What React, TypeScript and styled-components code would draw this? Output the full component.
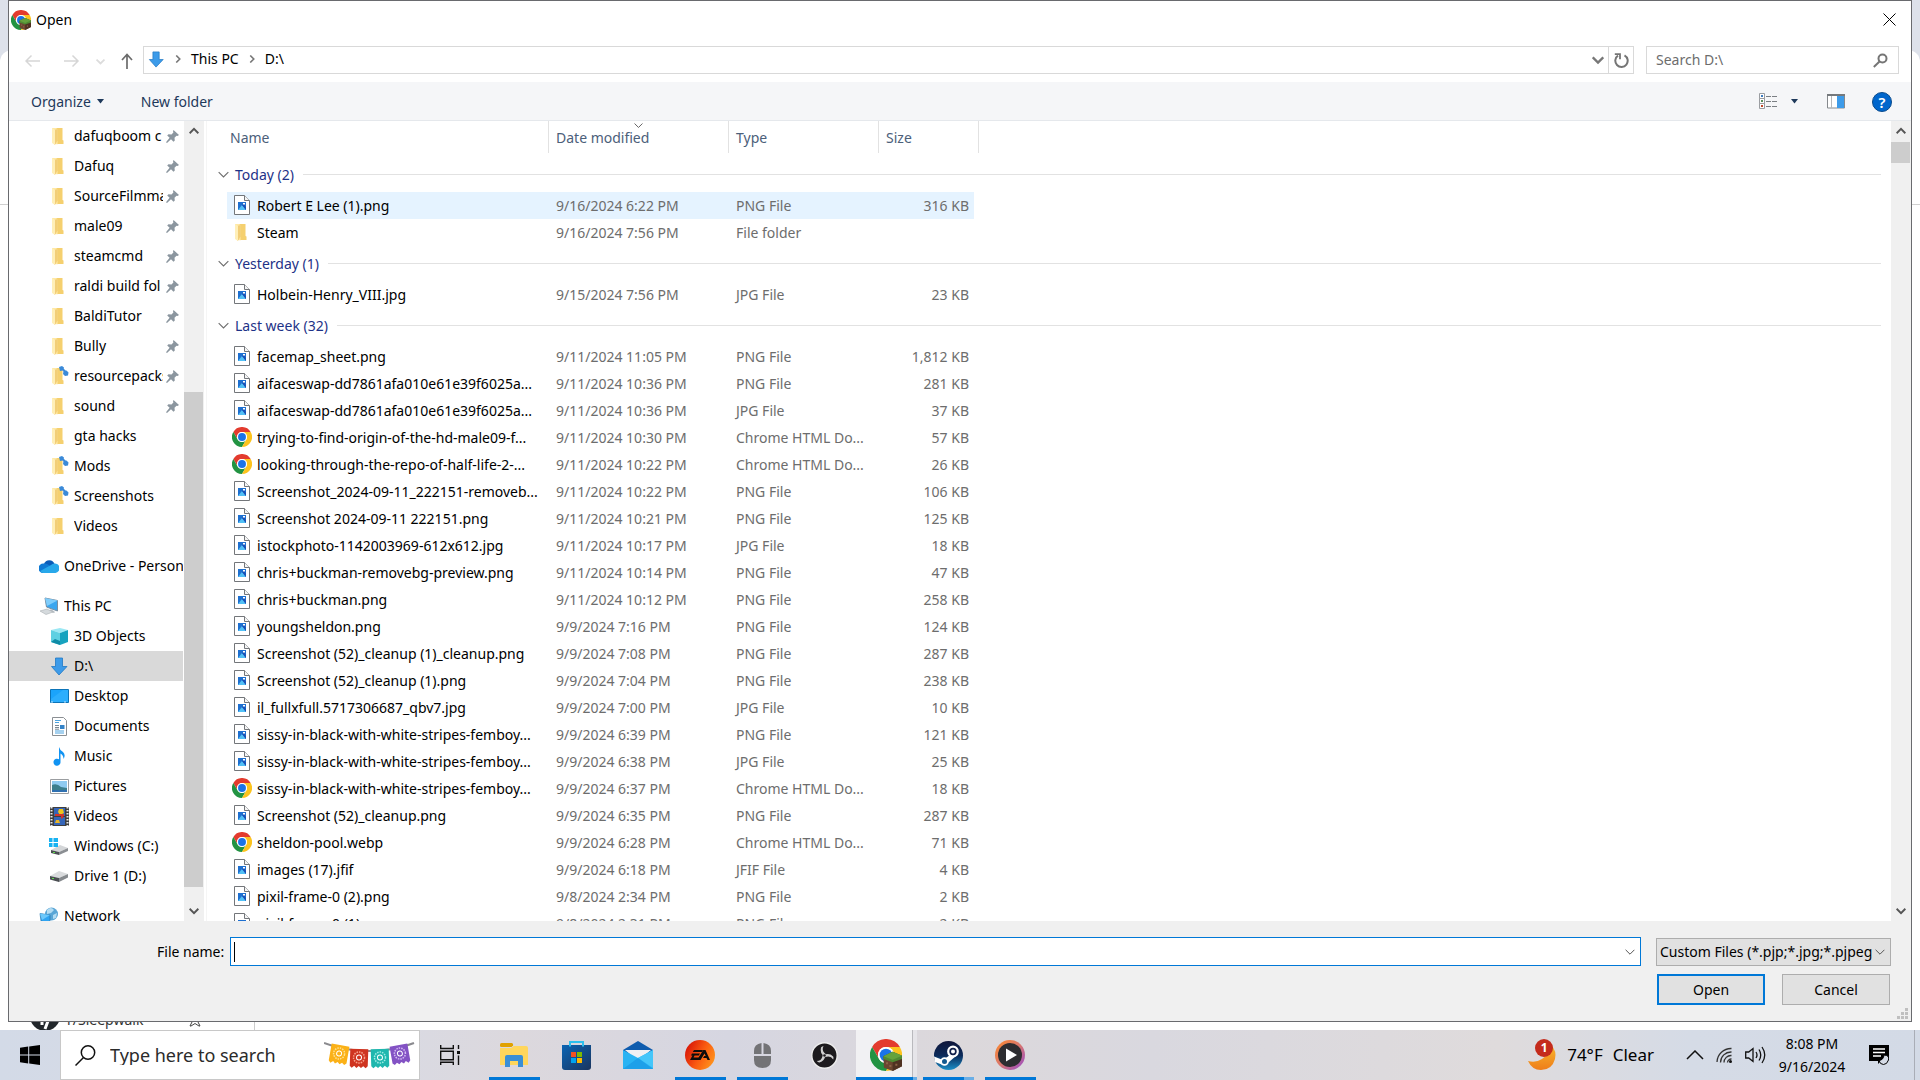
import React from "react";
import styled, { createGlobalStyle, css } from "styled-components";

const Global = createGlobalStyle`
  * { box-sizing: border-box; }
  html, body, #root { height: 100%; margin: 0; }
  body {
    font-family: "Noto Sans", "Open Sans", sans-serif;
    font-size: 14px;
    line-height: 20px;
    color: #000;
    overflow: hidden;
    background: #fff;
  }
  button, input, select { font: inherit; color: inherit; }
  svg { display: block; flex: none; }
`;

/* ---------- page and window ---------- */

const Screen = styled.div`
  position: relative;
  display: grid;
  grid-template-rows: minmax(0, 1fr) auto;
  height: 100vh;
`;

const Behind = styled.div`
  position: absolute;
  inset: 0 0 50px;
  display: flex;
  flex-direction: column;
  padding-top: 50px;
  background: #dde1ea;
`;

const BehindHeader = styled.div`
  height: 155px;
  flex: none;
  background: #fff;
  border-bottom: 1px solid #d0d0d0;
  border-radius: 12px 12px 0 0;
`;

const BehindBody = styled.div`
  flex: 1;
  display: flex;
  align-items: flex-end;
  background: #fff;
`;

const BehindSide = styled.div`
  display: flex;
  align-items: center;
  gap: 7px;
  width: 255px;
  height: 20px;
  padding: 0 53px 0 30px;
  border-right: 1px solid #ccc;
  font-size: 14px;
  color: #333;
  span { flex: 1; }
`;

const Window = styled.main`
  position: relative;
  display: flex;
  flex-direction: column;
  min-height: 0;
  margin: 0 8px 8px;
  border: 1px solid #696a6e;
  background: #fff;
`;

const TitleBar = styled.header`
  display: flex;
  align-items: center;
  gap: 5px;
  height: 37px;
  padding: 0 15px 0 2px;
  h1 {
    flex: 1;
    margin: 0;
    font-size: 14px;
    font-weight: 400;
  }
`;

const IconButton = styled.button`
  display: flex;
  align-items: center;
  justify-content: center;
  padding: 0;
  border: 0;
  background: none;
`;

const NavRow = styled.nav`
  display: flex;
  align-items: center;
  height: 44px;
  padding: 0 12px 0 16px;
`;

const NavArrows = styled.div`
  display: flex;
  align-items: center;
  gap: 16px;
  width: 118px;
  padding-top: 2px;
`;

const AddressBar = styled.div`
  flex: 1;
  display: flex;
  align-items: center;
  height: 28px;
  margin-right: 12px;
  border: 1px solid #d9d9d9;
`;

const Crumbs = styled.div`
  flex: 1;
  display: flex;
  align-items: center;
  gap: 9px;
  padding: 0 0 2px 4px;
  button { padding: 0; border: 0; background: none; }
`;

const RefreshCell = styled.div`
  display: flex;
  align-items: center;
  justify-content: center;
  width: 25px;
  height: 100%;
  margin-left: 4px;
  border-left: 1px solid #d9d9d9;
`;

const SearchBox = styled.label`
  display: flex;
  align-items: center;
  width: 253px;
  height: 28px;
  padding: 0 10px 0 9px;
  border: 1px solid #d9d9d9;
  input {
    flex: 1;
    min-width: 0;
    padding: 0;
    border: 0;
    outline: 0;
    background: none;
  }
  input::placeholder { color: #6d6d6d; opacity: 1; }
`;

const Toolbar = styled.div`
  display: flex;
  align-items: center;
  height: 39px;
  padding: 1px 19px 0 22px;
  border-bottom: 1px solid #e5e8ec;
  background: #f5f6f8;
  color: #1e395b;
`;

const ToolButton = styled.button<{ $end?: number }>`
  display: flex;
  align-items: center;
  gap: 6px;
  margin-right: ${(p) => p.$end ?? 0}px;
  padding: 0;
  border: 0;
  background: none;
`;

const Spacer = styled.div`flex: 1;`;

const Body = styled.div`
  flex: 1;
  display: flex;
  min-height: 0;
`;

/* ---------- scroll bars ---------- */

const ScrollTrack = styled.div`
  display: flex;
  flex-direction: column;
  flex: none;
  width: 20px;
  background: #f0f0f0;
  button { height: 20px; }
`;

const TrackPart = styled.div<{ $grow: number; $thumb?: boolean }>`
  flex: ${(p) => p.$grow} 1 0;
  ${(p) => p.$thumb && css`margin-right: 1px; background: #cdcdcd;`}
`;

function Scroll({ before, thumb, after }: { before: number; thumb: number; after: number }) {
  return (
    <ScrollTrack>
      <IconButton aria-label="Scroll up"><Chevron dir="up" size={10} width={2} color="#555" /></IconButton>
      <TrackPart $grow={before} />
      <TrackPart $grow={thumb} $thumb />
      <TrackPart $grow={after} />
      <IconButton aria-label="Scroll down"><Chevron size={10} width={2} color="#555" /></IconButton>
    </ScrollTrack>
  );
}

/* ---------- navigation pane ---------- */

const Tree = styled.aside`
  display: flex;
  flex-direction: column;
  gap: 10px;
  flex: none;
  width: 175px;
  overflow: hidden;
`;

const TreeGroup = styled.ul`
  margin: 0;
  padding: 0;
  list-style: none;
`;

const TreeRow = styled.li<{ $root?: boolean; $active?: boolean }>`
  display: flex;
  align-items: center;
  gap: 5px;
  height: 30px;
  margin-right: 1px;
  padding-left: ${(p) => (p.$root ? 30 : 40)}px;
  background: ${(p) => (p.$active ? "#d9d9d9" : "none")};
  white-space: nowrap;
  span {
    flex: 1;
    min-width: 0;
    overflow: hidden;
  }
`;

const IconSlot = styled.div`
  display: flex;
  justify-content: center;
  flex: none;
  width: 20px;
`;

const PinCell = styled.div`
  margin: 0 4px 0 -2px;
`;

/* ---------- file list ---------- */

const ListPane = styled.section`
  flex: 1;
  min-width: 0;
  overflow: hidden;
  margin-left: 2px;
  padding: 0 10px 0 9px;
  border-left: 1px solid #f5f5f5;
`;

const Table = styled.table`
  width: 100%;
  table-layout: fixed;
  border-spacing: 0;
  white-space: nowrap;
  td, th {
    padding: 0;
    text-align: left;
    font-weight: 400;
  }
`;

const HeadRow = styled.tr`
  height: 36px;
  color: #4c607a;
  th { vertical-align: top; }
`;

const HeadCell = styled.div<{ $first?: boolean }>`
  position: relative;
  height: 32px;
  padding: 1px 0 0 ${(p) => (p.$first ? 3 : 7)}px;
  border-right: 1px solid #e2e2e2;
  line-height: 32px;
`;

const SortMark = styled.div`
  position: absolute;
  top: 0;
  left: calc(50% - 5px);
`;

const GroupRow = styled.tr`height: 35px;`;

const GroupLabel = styled.div`
  display: flex;
  align-items: center;
  gap: 6px;
  padding-left: 2px;
  color: #1e3287;
  &::after {
    content: "";
    flex: 1;
    height: 1px;
    margin-left: 3px;
    background: #e2e2e2;
  }
`;

const FileRow = styled.tr<{ $hot?: boolean }>`
  height: 27px;
  color: #6d6d6d;
  td:nth-child(n + 2):nth-child(-n + 5) {
    background: ${(p) => (p.$hot ? "#e5f3ff" : "none")};
    background-clip: padding-box;
  }
  td:nth-child(3), td:nth-child(4) { padding-left: 7px; }
  td:nth-child(5) {
    padding-right: 5px;
    border-right: 5px solid transparent;
    text-align: right;
  }
`;

const NameCell = styled.div`
  display: flex;
  align-items: center;
  gap: 5px;
  padding-left: 5px;
  color: #000;
  svg { margin-bottom: 2px; }
`;

/* ---------- footer ---------- */

const Footer = styled.form`
  position: relative;
  display: flex;
  flex-direction: column;
  gap: 8px;
  height: 100px;
  padding: 16px 20px 0 148px;
  background: #f0f0f0;
`;

const FooterRow = styled.div<{ $end?: boolean }>`
  display: flex;
  align-items: center;
  justify-content: ${(p) => (p.$end ? "flex-end" : "flex-start")};
  gap: ${(p) => (p.$end ? 17 : 0)}px;
  padding-right: ${(p) => (p.$end ? 1 : 0)}px;
  label { flex: none; width: 73px; }
`;

const NameField = styled.div`
  flex: 1;
  display: flex;
  align-items: center;
  height: 29px;
  margin-right: 15px;
  padding: 0 5px 0 3px;
  border: 1px solid #0078d7;
  background: #fff;
  input {
    flex: 1;
    min-width: 0;
    height: 20px;
    padding: 0 2px;
    border: 0;
    border-left: 1px solid #000;
    outline: 0;
  }
`;

const TypeField = styled.div`
  display: grid;
  align-items: center;
  width: 235px;
  height: 28px;
  border: 1px solid #adadad;
  background: #e1e1e1;
  select {
    grid-area: 1 / 1;
    width: 100%;
    height: 26px;
    padding: 0 0 0 3px;
    border: 0;
    outline: 0;
    appearance: none;
    background: none;
  }
  svg {
    grid-area: 1 / 1;
    justify-self: end;
    margin-right: 5px;
    pointer-events: none;
  }
`;

const DialogButton = styled.button<{ $primary?: boolean }>`
  width: 108px;
  height: 31px;
  padding: 0;
  border: ${(p) => (p.$primary ? "2px solid #0078d7" : "1px solid #adadad")};
  background: #e1e1e1;
`;

const Grip = styled.div`
  position: absolute;
  right: 3px;
  bottom: 2px;
`;

/* ---------- taskbar ---------- */

const Taskbar = styled.footer`
  position: relative;
  display: flex;
  height: 50px;
  background: linear-gradient(90deg, #d3dae7 0, #d9dae3 20%, #dcd8dd 27%, #d6d6e1 38%, #dcd8db 50%, #d9d8df 60%, #dfdbdc 78%, #d5dbe6 88%, #d3dae6 100%);
`;

const StartButton = styled(IconButton)`width: 60px;`;

const TaskSearch = styled.label`
  display: flex;
  align-items: center;
  gap: 14px;
  width: 360px;
  padding: 0 4px 0 14px;
  border: 1px solid #c8c8c8;
  background: #fff;
  input {
    flex: 1;
    min-width: 0;
    padding: 0;
    border: 0;
    outline: 0;
    background: none;
    font-size: 18px;
  }
  input::placeholder { color: #2b2b2b; opacity: 1; }
`;

const Apps = styled.div`
  flex: 1;
  display: flex;
`;

const TaskView = styled(IconButton)`
  width: 63px;
  padding-right: 3px;
`;

const AppButton = styled.button<{ $open?: boolean; $front?: boolean; $stack?: boolean }>`
  position: relative;
  display: flex;
  align-items: center;
  justify-content: center;
  width: 62px;
  padding: 0;
  border: 0;
  background: ${(p) => (p.$front ? "linear-gradient(90deg, transparent 1px, #f1f1f3 1px 57px, #b9b9bd 57px 58px, #e6e5e9 58px)" : "none")};
  &::after {
    content: ${(p) => (p.$open ? '""' : "none")};
    position: absolute;
    left: ${(p) => (p.$front ? 1 : 6)}px;
    right: ${(p) => (p.$front ? 0 : 5)}px;
    bottom: 0;
    height: 3px;
    background: ${(p) =>
      p.$stack
        ? "linear-gradient(90deg, #0078d7 41px, #6aaee6 41px)"
        : p.$front
          ? "linear-gradient(90deg, #0078d7 57px, #6aaee6 57px)"
          : "#0078d7"};
  }
`;

const Tray = styled.div`
  display: flex;
  align-items: center;
  padding-right: 31px;
`;

const Weather = styled.button`
  display: flex;
  align-items: center;
  gap: 10px;
  margin-right: 32px;
  padding: 0;
  border: 0;
  background: none;
  font-size: 17px;
`;

const MoonBox = styled.div`
  position: relative;
  b {
    position: absolute;
    top: 0;
    left: 7px;
    width: 18px;
    height: 18px;
    border-radius: 9px;
    background: #c42b1c;
    color: #fff;
    font-size: 12px;
    line-height: 18px;
    text-align: center;
  }
`;

const TrayIcons = styled.div`
  display: flex;
  align-items: center;
  gap: 12px;
`;

const Clock = styled.time`
  width: 92px;
  margin-right: 11px;
  font-size: 14px;
  line-height: 23px;
  text-align: center;
`;

const DesktopEdge = styled.div`
  position: absolute;
  top: 0;
  bottom: 0;
  right: 5px;
  width: 1px;
  background: #a9adb6;
`;

/* ---------- icons ---------- */

function Chevron({ dir = "down", size = 10, width = 1, color = "#555" }: { dir?: "up" | "down" | "right"; size?: number; width?: number; color?: string }) {
  const turn = { down: 0, up: 180, right: -90 }[dir];
  return (
    <svg width={size} height={size} viewBox="0 0 10 10">
      <path d="M0.6 2.8 5 7.2 9.4 2.8" fill="none" stroke={color} strokeWidth={width} transform={`rotate(${turn} 5 5)`} />
    </svg>
  );
}

const Caret = () => <svg width="7" height="5" viewBox="0 0 7 5"><path d="M0 0h7L3.500 4.500z" fill="#1e395b" /></svg>;

function Chrome({ size = 20, block }: { size?: number; block?: boolean }) {
  return (
    <svg width={size} height={size} viewBox="0 0 48 48">
      <path d="M24 12H44.800A24 24 0 0 0 3.200 12L13.600 30A12 12 0 0 1 24 12Z" fill="#e33b2e" />
      <path d="M13.600 30 3.200 12A24 24 0 0 0 24 48L34.400 30A12 12 0 0 1 13.600 30Z" fill="#229342" />
      <path d="M34.400 30 24 48A24 24 0 0 0 44.800 12H24A12 12 0 0 1 34.400 30Z" fill="#fcc31e" />
      <circle cx="24" cy="24" r="12" fill="#fff" />
      <circle cx="24" cy="24" r="9.500" fill="#1a73e8" />
      {block && (
        <g>
          <path d="M20 26 34 19 48 25V41L34 48 21 43Z" fill="#6b4630" />
          <path d="M34 31V48L48 41V25Z" fill="#4f3222" />
          <path d="M20 26 34 19 48 25V30L34 35 20 30Z" fill="#4f8a32" />
          <path d="M20 26 34 19 48 25 34 31Z" fill="#64a33d" />
          <path d="M24 35h3v3h-3zM29 39h3v3h-3zM38 37h3v3h-3z" fill="#8b6246" />
        </g>
      )}
    </svg>
  );
}

const Folder = ({ linked }: { linked?: boolean }) => (
  <svg width="20" height="20" viewBox="0 0 20 20">
    <path d="M3 2h10.500v12l1 .5V18H5z" fill="#f5d06f" />
    <path d="M3 2h4l1.500 1v15.500L5 17.500 3 16z" fill="#ffe9a6" />
    <path d="M8.500 3v11.500L6 19 5 18.500V4z" fill="#e9bd5a" opacity=".6" />
    <path d="M3 2l3 2v15L3 17z" fill="#ffefb8" />
    {linked && (
      <g fill="#3b8ad8">
        <path d="M10 1l3-1 2 1.500-1 3-3 .5z" />
        <path d="M14.500 5l3-.5 2 2-.5 3-3 .5-2-2z" />
        <path d="M12.500 3l1.500-1 3.500 3.500-1.500 1.500z" />
      </g>
    )}
  </svg>
);

const FileIcon = () => (
  <svg width="20" height="20" viewBox="0 0 20 20">
    <path d="M2.500.5h10l5 5v14h-15z" fill="#fff" stroke="#73767a" />
    <path d="M12.500.5v5h5" fill="#f4f4f4" stroke="#73767a" />
    <rect x="6" y="7" width="8" height="8" fill="#1d6fd0" />
    <path d="M6 15l4-5 4 5z" fill="#52c0f5" />
    <path d="M10 10l2-1 2 3v3z" fill="#1a4fb4" />
    <rect x="11" y="8" width="2" height="1.500" fill="#fff" />
  </svg>
);

const Pin = () => (
  <svg width="13" height="13" viewBox="0 0 13 13">
    <path d="M7.500 0 13 5l-1.500 1-1-.2L8.500 7.800l.3 2.700-1.300 1.300L5 9.200 1 13l-1-.7L3.600 7.800 1.200 5.500l1.300-1.300 3 .2L7.400 2.400 7 1.200z" fill="#8b969f" />
  </svg>
);

const BlueDown = ({ size = 19 }: { size?: number }) => (
  <svg width={size} height={size} viewBox="0 0 19 19">
    <path d="M5.500 1h7v8.500H17L9 18 1.500 9.500h4z" fill="#3d9be9" stroke="#2178c4" strokeWidth=".8" />
  </svg>
);

const treeIcons: Record<string, React.ReactNode> = {
  folder: <Folder />,
  linked: <Folder linked />,
  down: <BlueDown />,
  onedrive: (
    <svg width="20" height="14" viewBox="0 0 20 14">
      <path d="M5 5a5.500 5.500 0 0 1 10.500 0L10 10z" fill="#0b5cb8" />
      <path d="M4.500 4.500Q9 4 12 8l-8 6a4.500 4.500 0 0 1 .5-9.500z" fill="#0f7ad4" />
      <path d="M15 4.500a4.500 4.500 0 0 1 1.500 9.500H4.500Q2 13.800 1.200 12L12 6q1.500-1.200 3-1.500z" fill="#28a8ea" />
    </svg>
  ),
  pc: (
    <svg width="20" height="18" viewBox="0 0 20 18">
      <path d="M6 1l12.500 2.500V14L7.500 10z" fill="#3aa6ef" stroke="#7c8fa0" />
      <path d="M6 1l12.500 2.500L8 9z" fill="#7fcdfb" />
      <path d="M12 12l4 3-1 1-5-2z" fill="#b5bcc2" />
      <path d="M1 14l7-2 6 3-7 2.500z" fill="#d5dadd" stroke="#aab0b4" strokeWidth=".6" />
    </svg>
  ),
  cube: (
    <svg width="19" height="19" viewBox="0 0 19 19">
      <path d="M1 3l9-2 8 2-8 3z" fill="#9be8f4" /><path d="M1 3l9 3v12l-9-3z" fill="#5ed0e2" /><path d="M18 3l-8 3v12l8-3z" fill="#17a3bf" />
      <path d="M1 15l4-3 5 2v4z" fill="#0f8ba6" />
    </svg>
  ),
  desktop: (
    <svg width="19" height="15" viewBox="0 0 19 15">
      <path d="M.5.5h18v13H.5z" fill="#1ba4fb" stroke="#0c74b8" /><path d="M1 10 13 1h5v12H1z" fill="#3db8ff" opacity=".5" /><path d="M1 13h17" stroke="#bfe6ff" strokeDasharray="2 11" />
    </svg>
  ),
  docs: (
    <svg width="19" height="19" viewBox="0 0 19 19">
      <path d="M2.500.5h11l3 3v15h-14z" fill="#fff" stroke="#8b8f93" />
      <path d="M5 3.500h6M5 5.500h4M5 14h9M5 16h9" stroke="#4ca3df" /><path d="M5 8.500h4M5 10.500h4M5 12.200h4" stroke="#7b8893" /><path d="M10 8h4.500v4H10z" fill="#3383c8" />
    </svg>
  ),
  music: (
    <svg width="19" height="19" viewBox="0 0 19 19">
      <path d="M9 0q1 3.500 4 5 3 3 .5 7 0-4-3-5.500V15A3.500 3.500 0 1 1 9 12.300z" fill="#1193f2" />
    </svg>
  ),
  pictures: (
    <svg width="19" height="15" viewBox="0 0 19 15">
      <path d="M.5.5h18v14H.5z" fill="#fff" stroke="#9a9da0" /><path d="M2 2h15v7H2z" fill="#8fcbf0" /><path d="M2 6q5-2 9 2l6 1v4H2z" fill="#3d7f8c" /><path d="M2 11h15v2H2z" fill="#2f70b0" />
    </svg>
  ),
  videos: (
    <svg width="19" height="19" viewBox="0 0 19 19">
      <path d="M0 0h19v19H0z" fill="#3e3e3e" /><path d="M1.500 0v19M17.500 0v19" stroke="#e8e8e8" strokeWidth="2" strokeDasharray="1.500 1.500" />
      <path d="M4 1h11v8H4zM4 10h11v8H4z" fill="#3565b8" /><path d="M9 2h4l1 4-4 2-2-3z" fill="#f0c51c" /><path d="M5 7h9v2H5zM11 8l3 2-3 2z" fill="#d0342c" /><path d="M6 13h3l1 3H5z" fill="#e8b52a" />
    </svg>
  ),
  winDrive: (
    <svg width="20" height="18" viewBox="0 0 20 18">
      <path d="M2 13l9-5 8 3-9 4z" fill="#d4d6d8" /><path d="M2 13l8 2v3l-8-2z" fill="#4a4e52" /><path d="M10 15l9-4v3l-9 4z" fill="#8a8e92" /><path d="M4 15h2v1H4z" fill="#5fe04c" />
      <path d="M0 1h3.500v4H0zM4.500 1H9v4H4.500zM0 6h3.500v4H0zM4.500 6H9v4H4.500z" fill="#17b2f2" />
    </svg>
  ),
  drive: (
    <svg width="20" height="12" viewBox="0 0 20 12">
      <path d="M1 6l9-5 9 3-9 4z" fill="#d9dbdd" /><path d="M1 6l9 2v4l-9-2.500z" fill="#4a4e52" /><path d="M10 8l9-4v3.500l-9 4.500z" fill="#85898d" /><path d="M3 8h2v1H3z" fill="#5fe04c" />
    </svg>
  ),
  network: (
    <svg width="20" height="18" viewBox="0 0 20 18">
      <circle cx="12.500" cy="7" r="6.500" fill="#5aa6d6" /><path d="M8 3q4-4 7 0l-3 3-4 1zM14 8l4-2-1 5-3 1z" fill="#b4dcf2" />
      <path d="M1 6.500l10 1.500v8L2 14z" fill="#2fa4f2" stroke="#2a77ad" strokeWidth=".7" /><path d="M1 6.500l10 1.500-8 5z" fill="#6cc8fb" />
    </svg>
  ),
};

/* ---------- data ---------- */

type Node = { icon: string; name: string; pin?: boolean; root?: boolean; active?: boolean };

const tree: Node[][] = [
  [
    { icon: "folder", name: "dafuqboom c", pin: true },
    { icon: "folder", name: "Dafuq", pin: true },
    { icon: "folder", name: "SourceFilmma", pin: true },
    { icon: "folder", name: "male09", pin: true },
    { icon: "folder", name: "steamcmd", pin: true },
    { icon: "folder", name: "raldi build fol", pin: true },
    { icon: "folder", name: "BaldiTutor", pin: true },
    { icon: "folder", name: "Bully", pin: true },
    { icon: "linked", name: "resourcepacks", pin: true },
    { icon: "folder", name: "sound", pin: true },
    { icon: "folder", name: "gta hacks" },
    { icon: "linked", name: "Mods" },
    { icon: "linked", name: "Screenshots" },
    { icon: "folder", name: "Videos" },
  ],
  [{ icon: "onedrive", name: "OneDrive - Person", root: true }],
  [
    { icon: "pc", name: "This PC", root: true },
    { icon: "cube", name: "3D Objects" },
    { icon: "down", name: "D:\\", active: true },
    { icon: "desktop", name: "Desktop" },
    { icon: "docs", name: "Documents" },
    { icon: "music", name: "Music" },
    { icon: "pictures", name: "Pictures" },
    { icon: "videos", name: "Videos" },
    { icon: "winDrive", name: "Windows (C:)" },
    { icon: "drive", name: "Drive 1 (D:)" },
  ],
  [{ icon: "network", name: "Network", root: true }],
];

type Entry = [name: string, date: string, type: string, size: string];
const PNG = "PNG File";
const JPG = "JPG File";
const WEB = "Chrome HTML Do...";

const groups: { title: string; files: Entry[] }[] = [
  {
    title: "Today (2)",
    files: [
      ["Robert E Lee (1).png", "9/16/2024 6:22 PM", PNG, "316 KB"],
      ["Steam", "9/16/2024 7:56 PM", "File folder", ""],
    ],
  },
  { title: "Yesterday (1)", files: [["Holbein-Henry_VIII.jpg", "9/15/2024 7:56 PM", JPG, "23 KB"]] },
  {
    title: "Last week (32)",
    files: [
      ["facemap_sheet.png", "9/11/2024 11:05 PM", PNG, "1,812 KB"],
      ["aifaceswap-dd7861afa010e61e39f6025a...", "9/11/2024 10:36 PM", PNG, "281 KB"],
      ["aifaceswap-dd7861afa010e61e39f6025a...", "9/11/2024 10:36 PM", JPG, "37 KB"],
      ["trying-to-find-origin-of-the-hd-male09-f...", "9/11/2024 10:30 PM", WEB, "57 KB"],
      ["looking-through-the-repo-of-half-life-2-...", "9/11/2024 10:22 PM", WEB, "26 KB"],
      ["Screenshot_2024-09-11_222151-removeb...", "9/11/2024 10:22 PM", PNG, "106 KB"],
      ["Screenshot 2024-09-11 222151.png", "9/11/2024 10:21 PM", PNG, "125 KB"],
      ["istockphoto-1142003969-612x612.jpg", "9/11/2024 10:17 PM", JPG, "18 KB"],
      ["chris+buckman-removebg-preview.png", "9/11/2024 10:14 PM", PNG, "47 KB"],
      ["chris+buckman.png", "9/11/2024 10:12 PM", PNG, "258 KB"],
      ["youngsheldon.png", "9/9/2024 7:16 PM", PNG, "124 KB"],
      ["Screenshot (52)_cleanup (1)_cleanup.png", "9/9/2024 7:08 PM", PNG, "287 KB"],
      ["Screenshot (52)_cleanup (1).png", "9/9/2024 7:04 PM", PNG, "238 KB"],
      ["il_fullxfull.5717306687_qbv7.jpg", "9/9/2024 7:00 PM", JPG, "10 KB"],
      ["sissy-in-black-with-white-stripes-femboy...", "9/9/2024 6:39 PM", PNG, "121 KB"],
      ["sissy-in-black-with-white-stripes-femboy...", "9/9/2024 6:38 PM", JPG, "25 KB"],
      ["sissy-in-black-with-white-stripes-femboy...", "9/9/2024 6:37 PM", WEB, "18 KB"],
      ["Screenshot (52)_cleanup.png", "9/9/2024 6:35 PM", PNG, "287 KB"],
      ["sheldon-pool.webp", "9/9/2024 6:28 PM", WEB, "71 KB"],
      ["images (17).jfif", "9/9/2024 6:18 PM", "JFIF File", "4 KB"],
      ["pixil-frame-0 (2).png", "9/8/2024 2:34 PM", PNG, "2 KB"],
      ["pixil-frame-0 (1).png", "9/8/2024 2:31 PM", PNG, "2 KB"],
    ],
  },
];

const fileIcon = (type: string) => (type === WEB ? <Chrome /> : type === "File folder" ? <Folder /> : <FileIcon />);

/* ---------- taskbar drawings ---------- */

const flags: [number, number, number, string, string][] = [
  [6, 4, 10, "#fbb117", "#ffe08a"],
  [26, 8, 2, "#cf3420", "#f7a08a"],
  [47, 8, -2, "#1fb7ae", "#9fece4"],
  [67, 4, -10, "#8352c4", "#d3b8f2"],
];

const Bunting = () => (
  <svg width="91" height="28" viewBox="0 0 91 28">
    <path d="M0 2Q20 10 45 10T90 2" fill="none" stroke="#8a8a8e" strokeWidth="2" />
    {flags.map(([x, y, turn, fill, ink]) => (
      <g key={fill} transform={`translate(${x} ${y}) rotate(${turn} 9 9)`}>
        <path d="M0 0h18v17l-2 2-2.500-2-2.200 2L9 17l-2.300 2-2.200-2L2 19l-2-2z" fill={fill} />
        <circle cx="9" cy="8.500" r="5.500" fill="none" stroke={ink} strokeWidth="1.500" strokeDasharray="1.500 1" />
        <circle cx="9" cy="8.500" r="2.500" fill="none" stroke="#fff" />
      </g>
    ))}
  </svg>
);

const apps: { name: string; open?: boolean; front?: boolean; stack?: boolean; icon: React.ReactNode }[] = [
  {
    name: "File Explorer", open: true,
    icon: (
      <svg width="28" height="24" viewBox="0 0 28 24">
        <path d="M0 5h11l3-2h12q2 0 2 2v17H0z" fill="#ffd65c" /><path d="M0 1.500Q0 0 1.500 0H12q1.500 1 1 2.500L11.500 4H1.500Q0 4 0 3z" fill="#e0a100" />
        <path d="M5 24V14q0-2 2-2h14q2 0 2 2v10h-5v-6h-8v6z" fill="#3a8fd6" />
      </svg>
    ),
  },
  {
    name: "Store",
    icon: (
      <svg width="29" height="29" viewBox="0 0 29 29">
        <defs><linearGradient id="st" x2="1" y2="1"><stop stopColor="#0a64b4" /><stop offset="1" stopColor="#1b355e" /></linearGradient></defs>
        <path d="M0 4h29v22q0 3-3 3H3q-3 0-3-3z" fill="url(#st)" /><path d="M8 5.500V1h13v4.500" fill="none" stroke="#2cc0ee" strokeWidth="2" />
        <path d="M9 11h5v5H9z" fill="#f25022" /><path d="M15 11h5v5h-5z" fill="#7fba00" /><path d="M9 17h5v5H9z" fill="#00a4ef" /><path d="M15 17h5v5h-5z" fill="#ffb900" />
      </svg>
    ),
  },
  {
    name: "Mail",
    icon: (
      <svg width="30" height="28" viewBox="0 0 30 28">
        <path d="M0 9 15 0l15 9v4H0z" fill="#0f5cae" /><path d="M2 9h26L15 20z" fill="#f0f0f3" />
        <path d="M0 9l15 8 15-8v19H0z" fill="#29b3f3" /><path d="M30 9v18L15 17z" fill="#45c6fa" /><path d="M0 28 15 17l15 11z" fill="#1593e2" opacity=".6" />
      </svg>
    ),
  },
  {
    name: "EA", open: true,
    icon: (
      <svg width="30" height="30" viewBox="0 0 30 30">
        <defs><linearGradient id="ea" x1="0" y1="0.300" x2="1" y2="0.800"><stop stopColor="#d81608" /><stop offset=".5" stopColor="#fa5a10" /><stop offset="1" stopColor="#ff9a1e" /></linearGradient></defs>
        <circle cx="15" cy="15" r="15" fill="url(#ea)" />
        <path d="M9 10h9l-1.200 2H7.800zM7 13.500h8l-1.200 2H9.500l-1 2h5l4.800-7.500h2.200L25 20h-2.500l-1-2H18l1.200-2h1.500l-1.200-2.500L15.500 20H5l2.500-4.500H6z" fill="#0c0c0c" />
      </svg>
    ),
  },
  {
    name: "Mouse settings", open: true,
    icon: (
      <svg width="17" height="25" viewBox="0 0 17 25">
        <path d="M7.500 0v11H0V8q0-7 7.500-8zM9.500 0v11H17V8q0-7-7.500-8zM0 13h17v4q0 8-8.500 8T0 17z" fill="#737376" />
      </svg>
    ),
  },
  {
    name: "OBS Studio",
    icon: (
      <svg width="27" height="27" viewBox="0 0 27 27">
        <circle cx="13.500" cy="13.500" r="12.700" fill="#1d1b1e" stroke="#eee" strokeWidth="1.400" />
        {[0, 120, 240].map((a) => (
          <path key={a} d="M13.500 14.500Q8.500 11 10 5.500 10.500 4.500 12.500 4 10.500 8 13.500 11q1.500 1 1.500 2z" fill="#d0d0d0" transform={`rotate(${a} 13.500 13.500)`} />
        ))}
        <circle cx="13.500" cy="13.500" r="1.300" fill="#1d1b1e" />
      </svg>
    ),
  },
  { name: "Google Chrome", open: true, front: true, icon: <Chrome size={32} block /> },
  {
    name: "Steam", open: true, stack: true,
    icon: (
      <svg width="29" height="29" viewBox="0 0 29 29">
        <defs><linearGradient id="sm" x2="0" y2="1"><stop stopColor="#10163a" /><stop offset=".5" stopColor="#0b2a5a" /><stop offset="1" stopColor="#1b8fc8" /></linearGradient></defs>
        <circle cx="14.500" cy="14.500" r="14.500" fill="url(#sm)" />
        <path d="M0 15.500 9 19l7-5 4-3 3 3-8 7-6 3-8-3z" fill="#fff" />
        <circle cx="19" cy="10.500" r="4.800" fill="#12204a" stroke="#fff" strokeWidth="2.200" /><circle cx="19" cy="10.500" r="2" fill="#fff" />
        <circle cx="10.500" cy="20.500" r="3.400" fill="#12598f" stroke="#fff" strokeWidth="1.800" />
      </svg>
    ),
  },
  {
    name: "Media Player", open: true,
    icon: (
      <svg width="30" height="30" viewBox="0 0 30 30">
        <defs><linearGradient id="mp" x2="1" y2="1"><stop stopColor="#ff8a2a" /><stop offset=".5" stopColor="#d9776e" /><stop offset="1" stopColor="#9447d0" /></linearGradient></defs>
        <circle cx="15" cy="15" r="15" fill="url(#mp)" /><circle cx="15" cy="15" r="12" fill="#2d2d30" /><path d="M11 8.500v13L22 15z" fill="#fff" />
      </svg>
    ),
  },
];

export default function App() {
  return (
    <Screen>
      <Global />
      <Behind aria-hidden="true">
        <BehindHeader />
        <BehindBody>
          <BehindSide>
            <svg width="30" height="30" viewBox="0 0 30 30">
              <circle cx="15" cy="11" r="15" fill="#22272b" /><path d="M12 11v9M21 8l-6 16" stroke="#fff" strokeWidth="3" />
            </svg>
            <span>r/Sleepwalk</span>
            <svg width="12" height="14" viewBox="0 0 12 14"><path d="M6 1l1.700 4H11L8.500 8 11 13H10L6 10.500 2 13H1L3.500 8 1 5h3.300z" fill="none" stroke="#444" /></svg>
          </BehindSide>
        </BehindBody>
      </Behind>

      <Window>
        <TitleBar>
          <Chrome block />
          <h1>Open</h1>
          <IconButton aria-label="Close">
            <svg width="13" height="13" viewBox="0 0 13 13"><path d="M.5.5l12 12M12.500.5l-12 12" stroke="#000" /></svg>
          </IconButton>
        </TitleBar>

        <NavRow>
          <NavArrows>
            <IconButton aria-label="Back"><svg width="22" height="16" viewBox="0 0 22 16"><path d="M15 8H1M6.500 2.500 1 8l5.500 5.500" fill="none" stroke="#d6d6d6" strokeWidth="1.500" /></svg></IconButton>
            <IconButton aria-label="Forward"><svg width="17" height="16" viewBox="0 0 17 16"><path d="M1 8h14M9.500 2.500 15 8l-5.500 5.500" fill="none" stroke="#d6d6d6" strokeWidth="1.500" /></svg></IconButton>
            <IconButton aria-label="Recent locations"><Chevron size={9} width={2} color="#dcdcdc" /></IconButton>
            <IconButton aria-label="Up"><svg width="12" height="16" viewBox="0 0 12 16"><path d="M6 16V2M1 7l5-5.500L11 7" fill="none" stroke="#6b6b6b" strokeWidth="1.700" /></svg></IconButton>
          </NavArrows>
          <AddressBar>
            <Crumbs>
              <BlueDown size={17} />
              <Chevron dir="right" size={8} width={2} color="#777" />
              <button>This PC</button>
              <Chevron dir="right" size={8} width={2} color="#777" />
              <button>D:\</button>
            </Crumbs>
            <IconButton aria-label="Previous locations"><Chevron size={12} width={2} color="#777" /></IconButton>
            <RefreshCell>
              <IconButton aria-label="Refresh">
                <svg width="15" height="15" viewBox="0 0 15 15"><path d="M10.500 2.300A6.200 6.200 0 1 1 4 2.600" fill="none" stroke="#757575" strokeWidth="2" /><path d="M.8 1.200h5.200v5" fill="none" stroke="#757575" strokeWidth="1.800" /></svg>
              </IconButton>
            </RefreshCell>
          </AddressBar>
          <SearchBox>
            <input placeholder="Search D:\" aria-label="Search D:\" />
            <svg width="15" height="15" viewBox="0 0 15 15"><circle cx="9.500" cy="5.500" r="4" fill="none" stroke="#757575" strokeWidth="2" /><path d="M6.500 8.500.8 14" stroke="#757575" strokeWidth="2" /></svg>
          </SearchBox>
        </NavRow>

        <Toolbar>
          <ToolButton $end={37}>Organize<Caret /></ToolButton>
          <ToolButton>New folder</ToolButton>
          <Spacer />
          <ToolButton $end={14} aria-label="Change view">
            <svg width="18" height="17" viewBox="0 0 18 17">
              <path d="M.5.500h5v5h-5zM.5 5.500h5v5h-5zM.5 10.500h5v5h-5z" fill="#fff" stroke="#9a9da1" />
              <path d="M2 2h2v2H2z" fill="#3d7cc0" /><path d="M2 7h2v2H2z" fill="#5a8f5a" /><path d="M2 12h2v2H2z" fill="#c04a2c" />
              <path d="M7 3.500h5M13 3.500h5M7 8.500h5M13 8.500h5M7 13.500h5M13 13.500h5" stroke="#7b7f84" />
            </svg>
          </ToolButton>
          <ToolButton $end={29} aria-label="More views"><Caret /></ToolButton>
          <ToolButton $end={27} aria-label="Preview pane">
            <svg width="18" height="15" viewBox="0 0 18 15">
              <path d="M.5.500h17v13.500H.5z" fill="#fff" stroke="#85898d" /><path d="M0 1h18" stroke="#75797d" strokeWidth="2" /><path d="M4.500 2v12" stroke="#b5b8bb" /><path d="M10 2h7v12h-7z" fill="#3d9be9" />
            </svg>
          </ToolButton>
          <ToolButton aria-label="Help">
            <svg width="20" height="20" viewBox="0 0 20 20">
              <circle cx="10" cy="10" r="9.500" fill="#0066cc" stroke="#094a8c" />
              <text x="10" y="15.500" textAnchor="middle" fontSize="15" fontWeight="600" fill="#fff">?</text>
            </svg>
          </ToolButton>
        </Toolbar>

        <Body>
          <Tree aria-label="Folders">
            {tree.map((rows, g) => (
              <TreeGroup key={g}>
                {rows.map((n) => (
                  <TreeRow key={n.name} $root={n.root} $active={n.active}>
                    <IconSlot>{treeIcons[n.icon]}</IconSlot>
                    <span>{n.name}</span>
                    {n.pin && <PinCell><Pin /></PinCell>}
                  </TreeRow>
                ))}
              </TreeGroup>
            ))}
          </Tree>
          <Scroll before={251} thumb={495} after={14} />

          <ListPane>
            <Table>
              <colgroup>
                <col style={{ width: 11 }} />
                <col style={{ width: 322 }} />
                <col style={{ width: 180 }} />
                <col style={{ width: 150 }} />
                <col style={{ width: 100 }} />
                <col />
              </colgroup>
              <thead>
                <HeadRow>
                  <th />
                  <th><HeadCell $first>Name</HeadCell></th>
                  <th><HeadCell>Date modified<SortMark><Chevron size={9} /></SortMark></HeadCell></th>
                  <th><HeadCell>Type</HeadCell></th>
                  <th><HeadCell>Size</HeadCell></th>
                  <th />
                </HeadRow>
              </thead>
              {groups.map((g, gi) => (
                <tbody key={g.title}>
                  <GroupRow>
                    <th colSpan={6} scope="rowgroup">
                      <GroupLabel><Chevron size={11} color="#6d6d6d" />{g.title}</GroupLabel>
                    </th>
                  </GroupRow>
                  {g.files.map(([name, date, type, size], i) => (
                    <FileRow key={i} $hot={gi === 0 && i === 0}>
                      <td />
                      <td><NameCell>{fileIcon(type)}{name}</NameCell></td>
                      <td>{date}</td>
                      <td>{type}</td>
                      <td>{size}</td>
                      <td />
                    </FileRow>
                  ))}
                </tbody>
              ))}
            </Table>
          </ListPane>
          <Scroll before={1} thumb={21} after={738} />
        </Body>

        <Footer onSubmit={(e) => e.preventDefault()}>
          <FooterRow>
            <label htmlFor="file-name">File name:</label>
            <NameField>
              <input id="file-name" />
              <Chevron size={10} />
            </NameField>
            <TypeField>
              <select aria-label="File type"><option>Custom Files (*.pjp;*.jpg;*.pjpeg</option></select>
              <Chevron size={10} />
            </TypeField>
          </FooterRow>
          <FooterRow $end>
            <DialogButton $primary>Open</DialogButton>
            <DialogButton type="button">Cancel</DialogButton>
          </FooterRow>
          <Grip>
            <svg width="11" height="11" viewBox="0 0 11 11"><path d="M8 0h3v3H8zM4 4h3v3H4zM8 4h3v3H8zM0 8h3v3H0zM4 8h3v3H4zM8 8h3v3H8z" fill="#bfbfbf" /></svg>
          </Grip>
        </Footer>
      </Window>

      <Taskbar>
        <StartButton aria-label="Start">
          <svg width="20" height="20" viewBox="0 0 20 20"><path d="M0 2.800 8.200 1.600V9.500H0zM9.200 1.500 20 0V9.500H9.200zM0 10.500h8.200v7.900L0 17.200zM9.200 10.500H20V20L9.200 18.500z" fill="#000" /></svg>
        </StartButton>
        <TaskSearch>
          <svg width="21" height="21" viewBox="0 0 21 21"><circle cx="13" cy="7.500" r="6.700" fill="none" stroke="#111" strokeWidth="1.500" /><path d="M8.500 12.500.5 20.500" stroke="#111" strokeWidth="1.500" /></svg>
          <input placeholder="Type here to search" aria-label="Type here to search" />
          <Bunting />
        </TaskSearch>
        <Apps>
          <TaskView aria-label="Task View">
            <svg width="20" height="20" viewBox="0 0 20 20"><path d="M.7 0v3.500h12.600V0M.7 6.200h12.600v8.600H.7zM.7 20v-2.700h12.600V20M18.500 0v4M18.500 10.500V20" fill="none" stroke="#111" strokeWidth="1.400" /><path d="M17 6h3v3h-3z" fill="#111" /></svg>
          </TaskView>
          {apps.map((a) => (
            <AppButton key={a.name} aria-label={a.name} $open={a.open} $front={a.front} $stack={a.stack}>{a.icon}</AppButton>
          ))}
        </Apps>
        <Tray>
          <Weather>
            <MoonBox>
              <svg width="29" height="32" viewBox="0 0 29 32">
                <defs><linearGradient id="mn" x2="0" y2="1"><stop stopColor="#f8b62c" /><stop offset="1" stopColor="#ee7d1a" /></linearGradient></defs>
                <path d="M23 6q6 6 4 14-3 11-14 11-9 0-13-9 8 2 14-2 8-5 9-14z" fill="url(#mn)" />
              </svg>
              <b>1</b>
            </MoonBox>
            <span>74°F</span>
            <span>Clear</span>
          </Weather>
          <TrayIcons>
            <IconButton aria-label="Show hidden icons">
              <svg width="18" height="10" viewBox="0 0 18 10"><path d="M1 9l8-8 8 8" fill="none" stroke="#111" strokeWidth="1.500" /></svg>
            </IconButton>
            <svg width="17" height="17" viewBox="0 0 17 17">
              <g fill="none" stroke="#333" strokeWidth="1.300"><path d="M1 15A14 14 0 0 1 15.500 1.500M4.500 15.500A10.500 10.500 0 0 1 15.500 5M8 15.500A7 7 0 0 1 15.500 8.500M11.500 15.500A3.800 3.800 0 0 1 15.500 12" /></g>
              <circle cx="14.500" cy="14.500" r="1.500" fill="#111" />
            </svg>
            <svg width="21" height="18" viewBox="0 0 21 18">
              <path d="M.7 6h3L8 2.500v13L3.700 12h-3zM11 6q2 3 0 6M14 3.500q3.500 5.500 0 11M17 1q5.500 8 0 16" fill="none" stroke="#111" strokeWidth="1.300" />
            </svg>
          </TrayIcons>
          <Clock>8:08 PM<br />9/16/2024</Clock>
          <IconButton aria-label="Notifications">
            <svg width="20" height="20" viewBox="0 0 20 20">
              <path d="M0 0h20v15H13l-4 4v-3H0z" fill="#000" /><path d="M4 4h12M4 7.500h12M4 11h8" stroke="#fff" strokeWidth="1.300" />
              <path d="M15 10q-.5 5-5 5.500 1 4 4.500 4t5-4.500-4.500-5z" fill="#d5dbe6" stroke="#000" />
            </svg>
          </IconButton>
        </Tray>
        <DesktopEdge />
      </Taskbar>
    </Screen>
  );
}
